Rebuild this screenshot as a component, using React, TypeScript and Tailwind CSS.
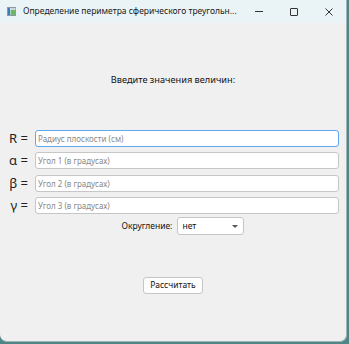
const FIELDS = [
  { label: "R =", placeholder: "Радиус плоскости (см)", focused: true },
  { label: "α =", placeholder: "Угол 1 (в градусах)", focused: false },
  { label: "β =", placeholder: "Угол 2 (в градусах)", focused: false },
  { label: "γ =", placeholder: "Угол 3 (в градусах)", focused: false },
];

function AppIcon() {
  return (
    <svg width="9" height="9" viewBox="0 0 9 9" className="shrink-0">
      <rect x="0.5" y="0.5" width="8" height="8" fill="#f4f7fa" stroke="#8a9aa8" />
      <rect x="1" y="1" width="2" height="7" fill="#3a78c8" />
      <rect x="3.5" y="3" width="5" height="5" fill="#6cb86a" />
      <rect x="3.5" y="1" width="5" height="2" fill="#c9d4de" />
    </svg>
  );
}

function TitleBar() {
  return (
    <div className="flex h-[23px] shrink-0 items-center bg-[#eaf4f7] pl-[7px]">
      <AppIcon />
      <span className="ml-[7px] min-w-0 truncate text-[8.5px] text-[#1a1a1a] [font-family:'Noto_Sans',sans-serif]">
        Определение периметра сферического треугольн...
      </span>
      <div className="ml-auto flex h-full shrink-0 items-center">
        <div className="flex w-[35px] justify-center">
          <div className="h-px w-[8px] bg-[#333]" />
        </div>
        <div className="flex w-[35px] justify-center">
          <div className="h-[8px] w-[8px] rounded-[1px] border border-[#333]" />
        </div>
        <div className="flex w-[35px] justify-center">
          <svg width="8" height="8" viewBox="0 0 8 8">
            <path d="M0.5 0.5L7.5 7.5M7.5 0.5L0.5 7.5" stroke="#333" strokeWidth="1" />
          </svg>
        </div>
      </div>
    </div>
  );
}

export default function App() {
  return (
    <div className="h-[344px] w-[349px] bg-[#4f8585]">
      <div className="flex h-[342px] w-[347px] flex-col overflow-hidden rounded-b-[7px] border-r border-b border-[#9fb4b5] bg-[#f0f0f0] [font-family:'Noto_Sans',sans-serif]">
        <TitleBar />
        <div className="flex flex-1 flex-col">
          <div className="mt-[50px] text-center text-[9.2px] text-[#111]">
            Введите значения величин:
          </div>
          <div className="mt-[43px] flex flex-col gap-[5.5px] pr-[7px]">
            {FIELDS.map((f) => (
              <div key={f.label} className="flex items-center">
                <div className="w-[28px] text-right text-[13px] leading-none text-[#222] whitespace-nowrap">
                  {f.label}
                </div>
                <input
                  readOnly
                  placeholder={f.placeholder}
                  className={`ml-[7px] h-[17px] flex-1 rounded-[3px] border bg-white px-[2px] text-[8px] outline-none placeholder:text-[#8a8a8a] ${
                    f.focused ? "border-[#5ea9ec]" : "border-[#c6c6c6]"
                  }`}
                />
              </div>
            ))}
          </div>
          <div className="mt-[3px] flex items-center justify-center pl-[20px]">
            <span className="text-[8.5px] text-[#111]">Округление:</span>
            <div className="ml-[5px] flex h-[18px] w-[67px] items-center justify-between rounded-[3px] border border-[#c6c6c6] bg-white pl-[4px] pr-[5px]">
              <span className="text-[8.5px] text-[#111]">нет</span>
              <svg width="6" height="3" viewBox="0 0 6 3">
                <path d="M0 0H6L3 3Z" fill="#555" />
              </svg>
            </div>
          </div>
          <div className="mt-[42px] flex justify-center">
            <button className="h-[17px] w-[60px] rounded-[3px] border border-[#c6c6c6] bg-[#fdfdfd] text-[8.5px] text-[#111]">
              Рассчитать
            </button>
          </div>
        </div>
      </div>
    </div>
  );
}
